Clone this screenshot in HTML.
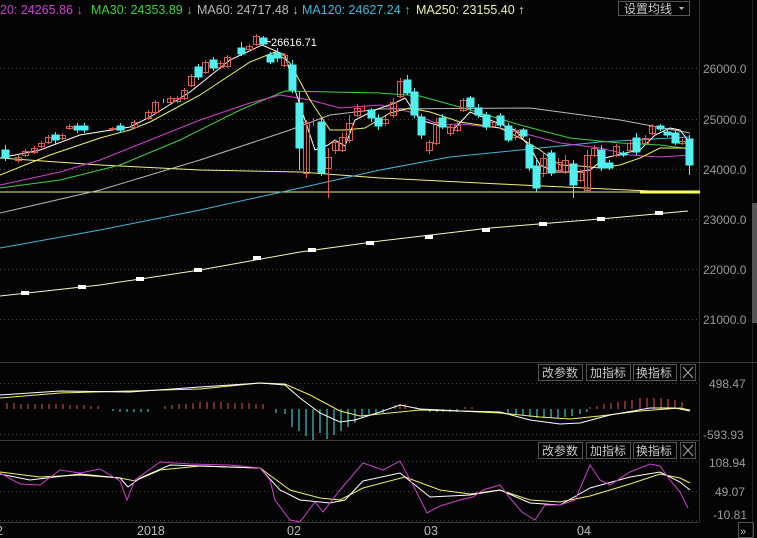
<!DOCTYPE html>
<html><head><meta charset="utf-8"><style>
html,body{margin:0;padding:0;background:#000;width:757px;height:538px;overflow:hidden}
svg{display:block}
text{font-family:"Liberation Sans","Noto Sans CJK SC",sans-serif}
</style></head><body>
<svg width="757" height="538" viewBox="0 0 757 538" xmlns="http://www.w3.org/2000/svg">
<rect width="757" height="538" fill="#040404"/>
<!-- legend -->
<g font-size="12.5">
<text x="0" y="14" fill="#d040d0">20: 24265.86 ↓</text>
<text x="91" y="14" fill="#40d040">MA30: 24353.89 ↓</text>
<text x="197" y="14" fill="#b8b8b8">MA60: 24717.48 ↓</text>
<text x="302" y="14" fill="#40b8d8">MA120: 24627.24 ↑</text>
<text x="416" y="14" fill="#f0f0b0">MA250: 23155.40 ↑</text>
</g>
<rect x="618.5" y="1.5" width="71" height="14" fill="none" stroke="#555"/>
<text x="624" y="13" font-size="12" fill="#c8c8c8">设置均线</text>
<path d="M679 7h5l-2.5 3z" fill="#bbb"/>
<!-- frame lines -->
<line x1="699.5" y1="0" x2="699.5" y2="522" stroke="#333"/>
<line x1="752.5" y1="0" x2="752.5" y2="538" stroke="#222"/>
<rect x="752" y="203" width="5" height="120" fill="#555"/>
<line x1="0" y1="362.5" x2="757" y2="362.5" stroke="#3a3a3a"/>
<line x1="0" y1="440.5" x2="699" y2="440.5" stroke="#3a3a3a"/>
<line x1="0" y1="522.5" x2="699" y2="522.5" stroke="#3a3a3a"/>
<!-- grid -->
<g stroke="#444" stroke-dasharray="1,3">
<line x1="0" y1="68.5" x2="699" y2="68.5"/><line x1="0" y1="119.5" x2="699" y2="119.5"/><line x1="0" y1="169.5" x2="699" y2="169.5"/><line x1="0" y1="219.5" x2="699" y2="219.5"/><line x1="0" y1="269.5" x2="699" y2="269.5"/><line x1="0" y1="319.5" x2="699" y2="319.5"/>
<line x1="0" y1="383.5" x2="699" y2="383.5"/><line x1="0" y1="434.5" x2="699" y2="434.5"/>
<line x1="0" y1="461.5" x2="699" y2="461.5"/><line x1="0" y1="491.5" x2="699" y2="491.5"/><line x1="0" y1="520.5" x2="699" y2="520.5"/>
</g>
<!-- axis labels -->
<g font-size="12" fill="#9a9a9a">
<text x="703" y="73">26000.0</text><text x="703" y="124">25000.0</text><text x="703" y="174">24000.0</text><text x="703" y="224">23000.0</text><text x="703" y="274">22000.0</text><text x="703" y="324">21000.0</text>
<text x="709" y="388">498.47</text><text x="703" y="439">-593.93</text>
<text x="709" y="467">108.94</text><text x="715" y="496">49.07</text><text x="713" y="519">-10.81</text>
</g>
<g font-size="12.5" fill="#bbb">
<text x="-4" y="535">2</text><text x="137" y="535">2018</text><text x="287" y="535">02</text><text x="424" y="535">03</text><text x="577" y="535">04</text>
</g>
<rect x="738.5" y="522.5" width="15" height="15" fill="none" stroke="#555"/>
<text x="740" y="535" font-size="11" fill="#bbb">»</text>
<!-- buttons -->
<g font-size="12" fill="#c8c8c8" stroke="#555" >
<rect x="538.5" y="364.5" width="44" height="16" fill="none"/><rect x="586.5" y="364.5" width="44" height="16" fill="none"/><rect x="633.5" y="364.5" width="43" height="16" fill="none"/><rect x="680.5" y="364.5" width="15" height="16" fill="none"/>
<rect x="538.5" y="442.5" width="44" height="16" fill="none"/><rect x="586.5" y="442.5" width="44" height="16" fill="none"/><rect x="633.5" y="442.5" width="43" height="16" fill="none"/><rect x="680.5" y="442.5" width="15" height="16" fill="none"/>
</g>
<g font-size="12" fill="#c8c8c8">
<text x="542" y="377">改参数</text><text x="590" y="377">加指标</text><text x="636" y="377">换指标</text>
<text x="542" y="455">改参数</text><text x="590" y="455">加指标</text><text x="636" y="455">换指标</text>
</g>
<path d="M683 367l10 11M693 367l-10 11M683 445l10 11M693 445l-10 11" stroke="#aaa" stroke-width="1"/>

<!-- MA lines main -->
<g fill="none" stroke-width="1">
<polyline stroke="#f0f080" points="0,158 100,165 200,170 300,172 380,178 500,184 650,191 690,193"/>
<line x1="0" y1="192" x2="700" y2="192" stroke="#f0f080"/>
<line x1="640" y1="192" x2="700" y2="192" stroke="#ffff60" stroke-width="3"/>
<polyline stroke="#f5f5c0" points="0,296 100,285 200,270 300,252 380,241 490,228 600,219 688,211"/>
<polyline stroke="#40b8d8" points="0,248 100,230 200,210 300,188 380,170 450,157 530,149 600,142 690,137"/>
<polyline stroke="#b8b8b8" points="0,213 100,190 200,160 290,130 330,115 380,109 530,108 620,120 690,133"/>
<polyline stroke="#40d040" points="0,188 60,180 120,165 180,140 240,110 285,91 380,93 420,96 470,110 520,125 570,138 620,143 660,145 690,149"/>
<polyline stroke="#d040d0" points="0,185 60,172 100,160 150,140 200,120 250,103 280,95 310,100 340,108 380,105 410,112 440,125 460,124 500,128 530,135 560,143 600,148 630,155 660,157 690,155"/>
<polyline stroke="#f0f060" points="0,175 50,155 100,138 130,130 150,122 200,95 250,62 275,52 290,63 310,100 330,130 345,130 365,128 390,113 410,108 430,112 460,122 500,128 520,138 540,150 560,165 580,166 600,168 620,165 640,158 660,148 690,148"/>
<polyline stroke="#ffffff" points="0,158 40,150 80,135 130,127 150,117 190,92 230,60 262,45 285,55 295,90 305,120 315,150 328,145 335,140 345,146 355,120 375,110 395,103 405,98 420,120 440,126 455,128 470,112 490,120 515,130 530,147 540,165 555,172 575,172 590,170 605,158 625,153 640,150 655,135 670,128 680,130 690,143"/>
</g>
<!-- MA250 markers -->
<g fill="#fff">
<rect x="21" y="291" width="8" height="4"/><rect x="78" y="285" width="8" height="4"/><rect x="136" y="277" width="8" height="4"/><rect x="194" y="268" width="8" height="4"/><rect x="253" y="256" width="8" height="4"/><rect x="308" y="248" width="8" height="4"/><rect x="366" y="241" width="8" height="4"/><rect x="425" y="235" width="8" height="4"/><rect x="482" y="228" width="8" height="4"/><rect x="539" y="222" width="8" height="4"/><rect x="597" y="217" width="8" height="4"/><rect x="655" y="211" width="8" height="4"/>
</g>
<!-- up candles (hollow red) -->
<g fill="none" stroke="#e05a50" stroke-width="1">
<path d="M18.5 155v8M25.5 149v8M34.5 146v8M41.5 141v7M48.5 135v9M62.5 133v7M69.5 124v6M112.5 127v4M134.5 120v9M148.5 110v10M155.5 100v14M170.5 96v8M177.5 96v7M184.5 88v12M191.5 74v13M205.5 60v14M220.5 61v8M227.5 55v13M249.5 44v7M256.5 34v12M284.5 53v14M306.5 120v58M313.5 118v8M328.5 148v50M335.5 140v14M342.5 133v19M349.5 115v28M357.5 104v13M364.5 105v7M385.5 116v10M393.5 98v20M400.5 78v20M429.5 140v14M436.5 118v27M450.5 124v12M457.5 122v10M463.5 98v14M492.5 120v8M515.5 128v12M543.5 152v25M558.5 158v14M565.5 155v19M580.5 170v12M587.5 150v42M594.5 145v12M616.5 144v13M630.5 140v12M645.5 135v10M652.5 124v11M682.5 139v6"/>
<rect x="15.5" y="157.5" width="6" height="3"/><rect x="22.5" y="151.5" width="6" height="4"/><rect x="31.5" y="148.5" width="6" height="4"/><rect x="38.5" y="143.5" width="6" height="3"/><rect x="45.5" y="137.5" width="6" height="5"/><rect x="59.5" y="135.5" width="6" height="3"/><rect x="66.5" y="126.5" width="6" height="2"/><rect x="109.5" y="128.5" width="6" height="1"/><rect x="131.5" y="122.5" width="6" height="5"/><rect x="145.5" y="112.5" width="6" height="6"/><rect x="152.5" y="102.5" width="6" height="10"/><rect x="167.5" y="98.5" width="6" height="4"/><rect x="174.5" y="98.5" width="6" height="3"/><rect x="181.5" y="90.5" width="6" height="8"/><rect x="188.5" y="76.5" width="6" height="9"/><rect x="202.5" y="62.5" width="6" height="10"/><rect x="217.5" y="63.5" width="6" height="4"/><rect x="224.5" y="57.5" width="6" height="9"/><rect x="246.5" y="46.5" width="6" height="3"/><rect x="253.5" y="36.5" width="6" height="8"/><rect x="281.5" y="55.5" width="6" height="10"/><rect x="303.5" y="122.5" width="6" height="51"/><rect x="325.5" y="157.5" width="6" height="11"/><rect x="332.5" y="142.5" width="6" height="8"/><rect x="339.5" y="137.5" width="6" height="13"/><rect x="346.5" y="123.5" width="6" height="17"/><rect x="354.5" y="108.5" width="6" height="7"/><rect x="382.5" y="119.5" width="6" height="4"/><rect x="390.5" y="102.5" width="6" height="13"/><rect x="397.5" y="81.5" width="6" height="15"/><rect x="426.5" y="142.5" width="6" height="8"/><rect x="433.5" y="122.5" width="6" height="21"/><rect x="447.5" y="127.5" width="6" height="6"/><rect x="454.5" y="125.5" width="6" height="5"/><rect x="460.5" y="100.5" width="6" height="10"/><rect x="489.5" y="122.5" width="6" height="4"/><rect x="512.5" y="130.5" width="6" height="7"/><rect x="540.5" y="158.5" width="6" height="15"/><rect x="555.5" y="162.5" width="6" height="8"/><rect x="562.5" y="160.5" width="6" height="12"/><rect x="577.5" y="172.5" width="6" height="8"/><rect x="584.5" y="155.5" width="6" height="35"/><rect x="591.5" y="148.5" width="6" height="7"/><rect x="613.5" y="146.5" width="6" height="9"/><rect x="627.5" y="143.5" width="6" height="7"/><rect x="642.5" y="138.5" width="6" height="5"/><rect x="649.5" y="126.5" width="6" height="7"/><rect x="679.5" y="141.5" width="6" height="2"/>
</g>
<!-- down candles (cyan filled) -->
<g fill="#50f0f0" stroke="#50f0f0">
<path d="M5.5 145v16M55.5 132v12M77.5 123v10M84.5 123v10M120.5 123v10M163.5 99v4M198.5 64v16M213.5 57v14M241.5 42v14M263.5 36v10M270.5 52v12M277.5 48v14M292.5 60v33M299.5 92v78M321.5 118v58M371.5 108v14M378.5 114v16M407.5 75v20M414.5 88v30M421.5 114v25M442.5 114v15M470.5 96v14M478.5 104v14M486.5 112v18M500.5 113v14M508.5 123v19M523.5 128v10M529.5 138v33M536.5 160v32M551.5 150v26M573.5 160v38M601.5 145v26M609.5 160v10M623.5 151v6M636.5 133v22M660.5 124v7M667.5 130v7M675.5 131v14M689.5 135v40" fill="none"/>
<rect x="2" y="150" width="7" height="8"/><rect x="52" y="135" width="7" height="5"/><rect x="74" y="126" width="7" height="4"/><rect x="81" y="126" width="7" height="4"/><rect x="117" y="126" width="7" height="4"/><rect x="195" y="67" width="7" height="10"/><rect x="210" y="60" width="7" height="8"/><rect x="238" y="48" width="7" height="6"/><rect x="260" y="38" width="7" height="6"/><rect x="267" y="55" width="7" height="7"/><rect x="274" y="53" width="7" height="5"/><rect x="289" y="65" width="7" height="25"/><rect x="296" y="103" width="7" height="45"/><rect x="318" y="122" width="7" height="51"/><rect x="368" y="110" width="7" height="8"/><rect x="375" y="118" width="7" height="8"/><rect x="404" y="80" width="7" height="13"/><rect x="411" y="92" width="7" height="23"/><rect x="418" y="117" width="7" height="18"/><rect x="439" y="118" width="7" height="9"/><rect x="467" y="98" width="7" height="9"/><rect x="475" y="108" width="7" height="7"/><rect x="483" y="115" width="7" height="12"/><rect x="497" y="116" width="7" height="9"/><rect x="505" y="126" width="7" height="14"/><rect x="520" y="130" width="7" height="6"/><rect x="526" y="145" width="7" height="23"/><rect x="533" y="166" width="7" height="22"/><rect x="548" y="153" width="7" height="20"/><rect x="570" y="164" width="7" height="21"/><rect x="598" y="150" width="7" height="18"/><rect x="606" y="163" width="7" height="5"/><rect x="620" y="153" width="7" height="2"/><rect x="633" y="138" width="7" height="14"/><rect x="657" y="126" width="7" height="3"/><rect x="664" y="132" width="7" height="3"/><rect x="672" y="133" width="7" height="10"/><rect x="686" y="139" width="7" height="26"/>
</g>
<text x="271" y="46" font-size="11" fill="#fff">26616.71</text>
<line x1="265" y1="41" x2="271" y2="42" stroke="#fff"/>

<!-- MACD histogram -->
<g stroke-width="1">
<path stroke="#e05a50" d="M7 403v6M14 403v6M21 404v5M28 404v5M35 404v5M42 404v5M49 404v5M56 404v5M63 404v5M70 405v4M77 405v4M84 405v4M91 406v3M98 406v3M165 406v3M172 405v4M179 404v5M186 404v5M193 403v6M200 402v7M207 402v7M214 402v7M221 402v7M228 403v6M235 403v6M242 403v6M249 403v6M256 404v5M263 404v5M395 405v4M400 404v5M405 404v5M416 407v2M465 407v2M472 407v2M590 407v2M597 406v3M604 404v5M611 403v6M618 402v7M625 401v8M632 400v9M640 398v11M647 398v11M654 398v11M661 398v11M668 399v10M675 400v9M682 402v7"/>
<path stroke="#50e8e8" d="M113 409v2M120 409v3M127 409v3M134 409v3M141 409v3M148 409v3M276 409v4M285 409v5M292 409v18M299 409v22M306 409v27M313 409v31M320 409v24M327 409v30M334 409v26M341 409v22M348 409v18M355 409v14M362 409v8M369 409v5M376 409v5M383 409v4M430 409v3M437 409v3M443 409v3M450 409v3M457 409v3M508 409v4M516 409v5M523 409v6M530 409v8M537 409v9M544 409v9M551 409v9M558 409v9M565 409v8M572 409v7M580 409v5M587 409v3"/>
</g>
<g fill="none">
<polyline stroke="#f0f060" points="0,398 60,393 130,391 200,389 260,383 285,384 310,395 340,411 360,416 380,414 420,410 460,411 500,413 540,417 570,419 600,416 640,411 680,408 690,410"/>
<polyline stroke="#ffffff" points="0,395 60,391 130,392 200,387 260,383 285,385 300,398 320,413 340,422 355,420 380,412 400,405 420,409 460,411 500,412 530,420 560,424 580,423 610,415 650,408 675,408 690,411"/>
</g>
<!-- KDJ -->
<g fill="none">
<polyline stroke="#f0f060" points="0,472 40,477 80,475 120,478 135,481 160,470 200,466 260,468 290,490 320,498 340,500 363,488 405,477 440,490 470,494 500,490 530,500 560,502 590,496 630,484 660,474 680,478 690,483"/>
<polyline stroke="#ffffff" points="0,474 30,480 80,474 120,478 128,487 140,478 170,465 200,466 260,468 280,490 300,500 330,503 345,500 363,481 400,473 430,497 470,495 500,490 530,503 560,505 590,488 630,477 660,472 680,482 690,490"/>
<polyline stroke="#d040d0" points="0,473 20,484 40,485 60,470 80,473 100,469 120,481 127,500 135,480 160,462 190,464 230,465 260,468 270,480 275,500 290,520 300,522 315,502 323,512 340,490 363,463 383,470 400,461 413,485 427,513 440,506 460,500 473,497 483,490 500,485 510,498 522,512 535,520 545,505 560,505 575,500 590,465 600,480 610,485 630,472 650,464 660,466 670,480 680,492 688,508"/>
</g>
</svg>
</body></html>
